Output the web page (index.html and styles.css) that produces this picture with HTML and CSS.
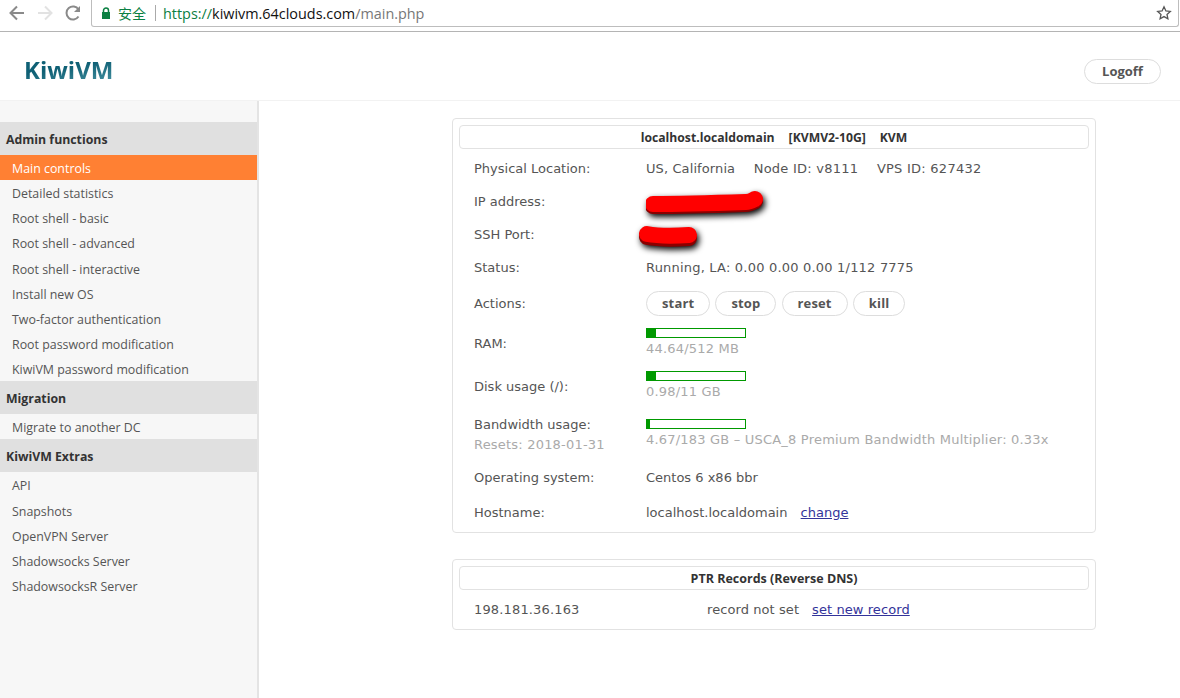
FILE: index.html
```html
<!DOCTYPE html>
<html lang="en">
<head>
    <meta charset="UTF-8">
    <title>KiwiVM</title>
    <link rel="stylesheet" href="styles.css">
</head>
<body>
<div class="toolbar">
    <svg class="nav-icon" width="20" height="20" viewBox="0 0 20 20"><path d="M17 10H4M10 3.5 3.5 10l6.5 6.5" fill="none" stroke="#8a8a8a" stroke-width="2"/></svg>
    <svg class="nav-icon" width="20" height="20" viewBox="0 0 20 20"><path d="M3 10h13M10 3.5l6.5 6.5-6.5 6.5" fill="none" stroke="#e2e2e2" stroke-width="2"/></svg>
    <svg class="nav-icon" width="20" height="20" viewBox="0 0 20 20"><path d="M15.5 13.5a6.5 6.5 0 1 1 0-7" fill="none" stroke="#8a8a8a" stroke-width="2"/><path d="M17 3v6h-6z" fill="#8a8a8a"/></svg>
    <div class="omnibox">
        <svg width="10" height="13" viewBox="0 0 10 13"><path d="M2.5 6V3.5a2.5 2.5 0 0 1 5 0V6" fill="none" stroke="#0b8043" stroke-width="1.5"/><rect x="1" y="5" width="8" height="7" fill="#0b8043"/></svg>
        <span class="secure">安全</span>
        <span class="url"><span class="scheme">https://</span>kiwivm.64clouds.com<span class="path">/main.php</span></span>
        <svg class="star" width="16" height="16" viewBox="0 0 16 16"><path d="M8 1.8l1.9 4.1 4.4.5-3.3 3 .9 4.4L8 11.6l-3.9 2.2.9-4.4-3.3-3 4.4-.5z" fill="none" stroke="#555" stroke-width="1.3"/></svg>
    </div>
</div>

<div class="header">
    <div class="logo">KiwiVM</div>
    <a class="btn logoff" href="#">Logoff</a>
</div>

<div class="page">
    <div class="sidebar">
        <h3>Admin functions</h3>
        <ul>
            <li class="active">Main controls</li>
            <li>Detailed statistics</li>
            <li>Root shell - basic</li>
            <li>Root shell - advanced</li>
            <li>Root shell - interactive</li>
            <li>Install new OS</li>
            <li>Two-factor authentication</li>
            <li>Root password modification</li>
            <li>KiwiVM password modification</li>
        </ul>
        <h3>Migration</h3>
        <ul>
            <li>Migrate to another DC</li>
        </ul>
        <h3>KiwiVM Extras</h3>
        <ul>
            <li>API</li>
            <li>Snapshots</li>
            <li>OpenVPN Server</li>
            <li>Shadowsocks Server</li>
            <li>ShadowsocksR Server</li>
        </ul>
    </div>

    <div class="content">
        <div class="card card-main">
            <div class="card-title">localhost.localdomain &nbsp; [KVMV2-10G] &nbsp; KVM</div>
            <table class="info">
                <tr class="r33">
                    <td class="label">Physical Location:</td>
                    <td class="location"><span class="digits">US, California</span><span class="wide">Node ID: v8111</span><span class="wide">VPS ID: 627432</span></td>
                </tr>
                <tr class="r33">
                    <td class="label">IP address:</td>
                    <td><svg class="scribble" width="130" height="30" viewBox="0 0 130 30"><path d="M7 19C40 19 70 18 100 17 104 17 107 15 109 14" fill="none" stroke="#8c0000" stroke-width="16" stroke-linecap="round"/><path d="M7 17C40 17 70 16 100 15 104 15 107 13 109 12" fill="none" stroke="#f00" stroke-width="16" stroke-linecap="round"/></svg></td>
                </tr>
                <tr class="r33">
                    <td class="label">SSH Port:</td>
                    <td><svg class="scribble ssh" width="70" height="26" viewBox="0 0 70 26"><path d="M9 15C20 17 35 17 51 16" fill="none" stroke="#8c0000" stroke-width="16" stroke-linecap="round"/><path d="M9 12C20 14 35 14 51 13" fill="none" stroke="#f00" stroke-width="16" stroke-linecap="round"/></svg></td>
                </tr>
                <tr class="r33">
                    <td class="label">Status:</td>
                    <td class="digits">Running, LA: 0.00 0.00 0.00 1/112 7775</td>
                </tr>
                <tr class="r38">
                    <td class="label">Actions:</td>
                    <td class="actions">
                        <a class="btn" href="#">start</a>
                        <a class="btn" href="#">stop</a>
                        <a class="btn" href="#">reset</a>
                        <a class="btn" href="#">kill</a>
                    </td>
                </tr>
                <tr class="r43">
                    <td class="label">RAM:</td>
                    <td class="meter"><div class="bar"><div class="fill" style="width: 9%"></div></div><div class="muted">44.64/512 MB</div></td>
                </tr>
                <tr class="r43">
                    <td class="label">Disk usage (/):</td>
                    <td class="meter"><div class="bar"><div class="fill" style="width: 9%"></div></div><div class="muted">0.98/11 GB</div></td>
                </tr>
                <tr class="r53">
                    <td class="label">Bandwidth usage:<div class="muted resets">Resets: 2018-01-31</div></td>
                    <td class="meter"><div class="bar"><div class="fill" style="width: 3%"></div></div><div class="muted">4.67/183 GB – USCA_8 Premium Bandwidth Multiplier: 0.33x</div></td>
                </tr>
                <tr class="r33">
                    <td class="label">Operating system:</td>
                    <td>Centos 6 x86 bbr</td>
                </tr>
                <tr class="r36">
                    <td class="label">Hostname:</td>
                    <td>localhost.localdomain <a class="link change" href="#">change</a></td>
                </tr>
            </table>
        </div>

        <div class="card">
            <div class="card-title">PTR Records (Reverse DNS)</div>
            <div class="ptr">
                <span class="ptr-ip">198.181.36.163</span>
                <span>record not set</span>
                <a class="link" href="#">set new record</a>
            </div>
        </div>
    </div>
</div>
</body>
</html>
```

FILE: styles.css
```css
html, body {
    margin: 0;
    padding: 0;
    height: 100%;
    overflow: hidden;
}

body {
    background-color: #fff;
    color: #444;
    font-family: "Open Sans", "Noto Sans", sans-serif;
    font-size: 13px;
}

.toolbar {
    display: flex;
    align-items: flex-start;
    height: 31px;
    padding-left: 7px;
    background-color: #fff;
    border-bottom: 1px solid #b4b4b4;
}

.nav-icon {
    margin: 3px 8px 0 0;
}

.omnibox {
    display: flex;
    align-items: center;
    flex: 1;
    height: 26px;
    margin-right: 1px;
    padding-left: 9px;
    border: 1px solid #bdbdbd;
    border-top: none;
    border-radius: 0 0 3px 3px;
}

.secure {
    margin-left: 7px;
    padding-right: 9px;
    border-right: 1px solid #aaa;
    color: #0b8043;
    font-family: "Noto Sans CJK SC", sans-serif;
    font-size: 14px;
    line-height: 16px;
}

.url {
    margin-left: 7px;
    color: #111;
    font-family: "Open Sans", sans-serif;
    font-size: 14.4px;
}

.scheme {
    color: #0b8043;
}

.path {
    color: #777;
}

.star {
    margin-left: auto;
    margin-right: 6px;
}

.header {
    display: flex;
    justify-content: space-between;
    align-items: center;
    height: 68px;
    padding: 0 19px 0 24px;
    border-bottom: 1px solid #f2f2f2;
}

.logo {
    margin-top: 6px;
    background: linear-gradient(170deg, #0f6075 45%, #4f99a8 100%);
    -webkit-background-clip: text;
    background-clip: text;
    color: transparent;
    font-size: 24px;
    font-weight: 700;
}

.btn {
    display: inline-block;
    box-sizing: border-box;
    height: 25px;
    padding: 0 15px;
    border: 1px solid #ddd;
    border-radius: 13px;
    background-color: #fff;
    color: #555;
    font-family: "Open Sans", sans-serif;
    font-size: 13px;
    font-weight: 700;
    line-height: 23px;
    text-align: center;
    text-decoration: none;
}

.logoff {
    width: 77px;
    margin-top: 10px;
    padding: 0;
}

.page {
    display: flex;
    height: 598px;
}

.sidebar {
    box-sizing: border-box;
    width: 259px;
    padding-top: 21px;
    background-color: #f7f7f7;
    border-right: 2px solid #e4e4e4;
}

.sidebar h3 {
    margin: 0;
    padding-left: 6px;
    height: 33px;
    background-color: #e0e0e0;
    color: #333;
    font-size: 12.3px;
    font-weight: 700;
    line-height: 35px;
}

.sidebar ul {
    list-style-type: none;
    margin: 0;
    padding: 0;
}

.sidebar li {
    height: 25.15px;
    padding-left: 12px;
    color: #555;
    font-size: 12.4px;
    line-height: 27px;
}

.sidebar li.active {
    background-color: #ff8033;
    color: #fff;
}

.content {
    padding: 17px 0 0 193px;
}

.card {
    box-sizing: border-box;
    width: 644px;
    margin-bottom: 26px;
    padding: 6px;
    border: 1px solid #e2e2e2;
    border-radius: 4px;
}

.card-main {
    height: 415px;
}

.card-title {
    height: 22px;
    border: 1px solid #e2e2e2;
    border-radius: 4px;
    color: #333;
    font-size: 12.5px;
    font-weight: 700;
    line-height: 23px;
    text-align: center;
}

.card-main .card-title {
    font-size: 12.2px;
    word-spacing: 1.5px;
}

.info {
    border-collapse: collapse;
    margin: 3px 0 0 15px;
    color: #555;
    font-family: "DejaVu Sans", sans-serif;
    font-size: 13px;
}

.info td {
    padding: 0;
    vertical-align: middle;
    white-space: nowrap;
}

.info td.meter {
    padding-bottom: 4px;
}

.label {
    width: 172px;
}

.r33 { height: 33px; }
.r36 { height: 36px; }
.r38 { height: 38px; }
.r43 { height: 43px; }
.r53 { height: 53px; }

.digits {
    letter-spacing: 0.2px;
}

.location .digits {
    letter-spacing: 0.1px;
}

.location .wide {
    margin-left: 18.5px;
    letter-spacing: 0.25px;
}

.scribble {
    display: block;
    filter: drop-shadow(2px 3px 3px #000);
}

.scribble.ssh {
    margin-left: -8px;
}

.actions .btn {
    margin-right: 1px;
    letter-spacing: 0.15px;
}

.bar {
    box-sizing: border-box;
    width: 100px;
    height: 10px;
    border: 1px solid #090;
    background-color: #fff;
}

.fill {
    height: 100%;
    background-color: #090;
}

.muted {
    margin-top: 3px;
    color: #aaa;
    letter-spacing: 0.2px;
}

.muted.resets {
    margin-top: 5px;
}

.link {
    color: #33339a;
}

.change {
    margin-left: 9px;
}

.ptr {
    display: flex;
    margin: 11px 0 5px 15px;
    color: #555;
    font-family: "DejaVu Sans", sans-serif;
    font-size: 13px;
    letter-spacing: 0.08px;
    line-height: 17px;
}

.ptr-ip {
    width: 233px;
    letter-spacing: 0.15px;
}

.ptr .link {
    margin-left: 13px;
}
```
